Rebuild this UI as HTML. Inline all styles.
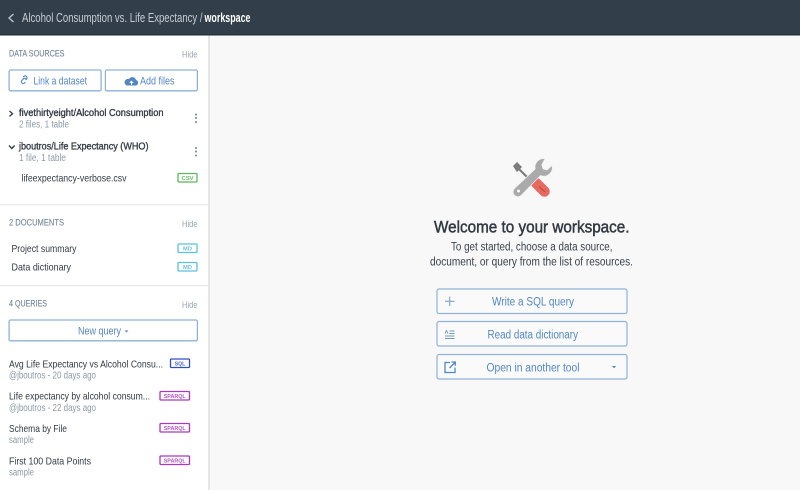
<!DOCTYPE html>
<html lang="en"><head><meta charset="utf-8"><title>Workspace</title>
<style>
html,body{margin:0;padding:0;width:800px;height:490px;overflow:hidden;background:#f8f8f8}
svg{display:block}
text{font-family:"Liberation Sans",sans-serif;white-space:pre}
.h{font-size:9.500px;fill:#71859a;stroke:#71859a;stroke-width:.12}
.hide{font-size:9.500px;fill:#98a6b3}
.t{font-size:10.500px;fill:#323a45}
.st{stroke:#323a45;stroke-width:.35}
.s{font-size:10px;fill:#8c9aa8}
.b{font-size:11px;fill:#5287c4}
.m{font-size:11.500px;fill:#5287c4}
.bd{fill:#fff;stroke:#8fb2d8;stroke-width:1.300}
.mb{fill:#fafafa;stroke:#8fb2d8;stroke-width:1.200}
.tag{font-size:5.500px;font-weight:bold}
.bg{fill:#fff;stroke-width:1.300}
</style></head><body>
<svg width="800" height="490" viewBox="0 0 800 490" xmlns="http://www.w3.org/2000/svg">
<rect width="800" height="490" fill="#f8f8f8"/>
<rect x="0" y="35" width="208" height="455" fill="#fff"/>
<rect x="208" y="35" width="2" height="455" fill="#e6e6e6"/>
<rect width="800" height="35" fill="#323e49"/>
<rect y="34" width="800" height="1.500" fill="#27313a"/>
<path d="M13.500 14 9 18l4.500 4" fill="none" stroke="#c3cad0" stroke-width="1.300"/>
<text x="22" y="22" font-size="12.500" fill="#c6ced5" textLength="180.500" lengthAdjust="spacingAndGlyphs">Alcohol Consumption vs. Life Expectancy /</text>
<text x="204.500" y="22" font-size="12.500" font-weight="bold" fill="#fff" textLength="46" lengthAdjust="spacingAndGlyphs">workspace</text>

<text class="h" x="9" y="56.500" textLength="55.500" lengthAdjust="spacingAndGlyphs">DATA SOURCES</text>
<text class="hide" x="182" y="57.500" textLength="15.500" lengthAdjust="spacingAndGlyphs">Hide</text>
<rect class="bd" x="9.100" y="70" width="92" height="20.800" rx="1.500"/>
<rect class="bd" x="105.400" y="70" width="92" height="20.800" rx="1.500"/>
<g fill="none" stroke="#5287c4" stroke-width="1.100"><path d="M24.500 81.500l-1 1a1.800 1.800 0 0 1-2.600-2.600l1.600-1.600a1.800 1.800 0 0 1 2.600 0M24.500 79.500l1-1a1.800 1.800 0 0 0-2.600-2.600l-.800.800" transform="translate(1 .5)"/></g>
<path d="M127 85.500h8.500a2.800 2.800 0 0 0 .5-5.500 3.800 3.800 0 0 0-7-1 3.300 3.300 0 0 0-2 6.500z" fill="#5287c4"/>
<path d="M131.500 85v-3.500M129.800 83l1.700-1.800 1.700 1.800" fill="none" stroke="#fff" stroke-width="1"/>
<text class="b" x="33.500" y="84.500" textLength="53.500" lengthAdjust="spacingAndGlyphs">Link a dataset</text>
<text class="b" x="140" y="84.500" textLength="34.500" lengthAdjust="spacingAndGlyphs">Add files</text>

<path d="M9.500 111l3 2.700-3 2.700" fill="none" stroke="#323a45" stroke-width="1.300"/>
<text class="t st" x="19" y="116" textLength="144.500" lengthAdjust="spacingAndGlyphs">fivethirtyeight/Alcohol Consumption</text>
<text class="s" x="19" y="127.500" textLength="50" lengthAdjust="spacingAndGlyphs">2 files, 1 table</text>
<g fill="#6d8196"><circle cx="196" cy="114.500" r="1"/><circle cx="196" cy="118" r="1"/><circle cx="196" cy="122" r="1"/><circle cx="196" cy="148" r="1"/><circle cx="196" cy="151.500" r="1"/><circle cx="196" cy="155.500" r="1"/></g>
<path d="M9 145.500l2.800 3 2.800-3" fill="none" stroke="#323a45" stroke-width="1.300"/>
<text class="t st" x="19" y="149.500" textLength="129.500" lengthAdjust="spacingAndGlyphs">jboutros/Life Expectancy (WHO)</text>
<text class="s" x="19" y="161" textLength="47" lengthAdjust="spacingAndGlyphs">1 file, 1 table</text>
<text class="t" x="21.500" y="181.500" textLength="105" lengthAdjust="spacingAndGlyphs">lifeexpectancy-verbose.csv</text>
<rect class="bg" x="178" y="173.500" width="19" height="8.500" rx="1" stroke="#5cb85c"/>
<text class="tag" x="181.500" y="180" fill="#6cbf6c" textLength="12" lengthAdjust="spacingAndGlyphs">CSV</text>

<rect y="204" width="208" height="1.200" fill="#e8e8e8"/>
<text class="h" x="9" y="225.500" textLength="55" lengthAdjust="spacingAndGlyphs">2 DOCUMENTS</text>
<text class="hide" x="182" y="227" textLength="15.500" lengthAdjust="spacingAndGlyphs">Hide</text>
<text class="t" x="11.500" y="252" textLength="65" lengthAdjust="spacingAndGlyphs">Project summary</text>
<rect class="bg" x="178" y="244" width="19" height="8.500" rx="1" stroke="#5bc0de"/>
<text class="tag" x="183" y="250.500" fill="#6cc5e0" textLength="9" lengthAdjust="spacingAndGlyphs">MD</text>
<text class="t" x="11.500" y="270.500" textLength="59.500" lengthAdjust="spacingAndGlyphs">Data dictionary</text>
<rect class="bg" x="178" y="262.500" width="19" height="8.500" rx="1" stroke="#5bc0de"/>
<text class="tag" x="183" y="269" fill="#6cc5e0" textLength="9" lengthAdjust="spacingAndGlyphs">MD</text>

<rect y="285" width="208" height="1.200" fill="#e8e8e8"/>
<text class="h" x="9" y="306.500" textLength="38" lengthAdjust="spacingAndGlyphs">4 QUERIES</text>
<text class="hide" x="182" y="308" textLength="15.500" lengthAdjust="spacingAndGlyphs">Hide</text>
<rect class="bd" x="9.100" y="320" width="188.300" height="20.800" rx="1.500"/>
<text class="b" x="78" y="334.500" textLength="43" lengthAdjust="spacingAndGlyphs">New query</text>
<path d="M124.500 330.500h4l-2 2z" fill="#5287c4"/>

<text class="t" x="9" y="367.500" textLength="154" lengthAdjust="spacingAndGlyphs">Avg Life Expectancy vs Alcohol Consu...</text>
<text class="s" x="9" y="378.500" textLength="87" lengthAdjust="spacingAndGlyphs">@jboutros - 20 days ago</text>
<rect class="bg" x="170.500" y="359" width="19" height="8.500" rx="1" stroke="#2f4fc4"/>
<text class="tag" x="174.700" y="365.500" fill="#4a65cc" textLength="10.500" lengthAdjust="spacingAndGlyphs">SQL</text>

<text class="t" x="9" y="399.500" textLength="141" lengthAdjust="spacingAndGlyphs">Life expectancy by alcohol consum...</text>
<text class="s" x="9" y="411" textLength="87" lengthAdjust="spacingAndGlyphs">@jboutros - 22 days ago</text>
<rect class="bg" x="160" y="391.500" width="29.500" height="8.500" rx="1" stroke="#a838bd"/>
<text class="tag" x="163.700" y="398" fill="#b356c6" textLength="22" lengthAdjust="spacingAndGlyphs">SPARQL</text>

<text class="t" x="9" y="432" textLength="58" lengthAdjust="spacingAndGlyphs">Schema by File</text>
<text class="s" x="9" y="443" textLength="25" lengthAdjust="spacingAndGlyphs">sample</text>
<rect class="bg" x="160" y="423.500" width="29.500" height="8.500" rx="1" stroke="#a838bd"/>
<text class="tag" x="163.700" y="430" fill="#b356c6" textLength="22" lengthAdjust="spacingAndGlyphs">SPARQL</text>

<text class="t" x="9" y="464.500" textLength="82" lengthAdjust="spacingAndGlyphs">First 100 Data Points</text>
<text class="s" x="9" y="475.500" textLength="25" lengthAdjust="spacingAndGlyphs">sample</text>
<rect class="bg" x="160" y="456" width="29.500" height="8.500" rx="1" stroke="#a838bd"/>
<text class="tag" x="163.700" y="462.500" fill="#b356c6" textLength="22" lengthAdjust="spacingAndGlyphs">SPARQL</text>

<!-- tools icon -->
<path d="M513 166l4-4 5 5-1.800 1.800 8.300 8.200-1.500 1.500-8.300-8.200-1.800 1.800z" fill="#7c7c7c"/>
<path d="M536 183l8.500 8.500" fill="none" stroke="#e8695f" stroke-width="10.500" stroke-linecap="round"/>
<path d="M539 186.500l6 5.500" stroke="#b9483f" stroke-width="1"/>
<path d="M545 158.800a8.500 8.500 0 0 0-9.800 10.200L514.500 188.500a4.800 4.800 0 0 0 6.800 6.800L540.500 175.500a8.500 8.500 0 0 0 11.500-10l-5 4.500-4-1.200-1.200-4z" fill="#aaaaaa" stroke="#f2f2f2" stroke-width=".7"/>
<circle cx="518.500" cy="191" r="1.500" fill="#f8f8f8"/>

<text x="434" y="232.700" font-size="17" fill="#343a42" stroke="#343a42" stroke-width=".5" textLength="195.500" lengthAdjust="spacingAndGlyphs">Welcome to your workspace.</text>
<text x="451" y="250.300" font-size="11.500" fill="#3a424b" textLength="161.500" lengthAdjust="spacingAndGlyphs">To get started, choose a data source,</text>
<text x="430" y="265.300" font-size="11.500" fill="#3a424b" textLength="203" lengthAdjust="spacingAndGlyphs">document, or query from the list of resources.</text>

<rect class="mb" x="437" y="289" width="190" height="24.500" rx="2"/>
<rect class="mb" x="437" y="321.500" width="190" height="24.500" rx="2"/>
<rect class="mb" x="437" y="354.500" width="190" height="24.500" rx="2"/>
<path d="M445 301.300h9.500M449.700 296.500v9.500" stroke="#7fa3cc" stroke-width="1.100"/>
<path d="M445 338.500h9.500M445 336h9.500M449.500 333.500h5M449.500 331h5M445 333.500l1.500-3 1.500 3" fill="none" stroke="#6f97c7" stroke-width=".9"/>
<path d="M450 362.500h-5v10h10v-5" fill="none" stroke="#5287c4" stroke-width="1.300"/>
<path d="M449.500 368l5-5M451.500 362h3.800v3.800" fill="none" stroke="#5287c4" stroke-width="1.300"/>
<text class="m" x="492" y="305.300" textLength="82" lengthAdjust="spacingAndGlyphs">Write a SQL query</text>
<text class="m" x="487.500" y="338.300" textLength="90.500" lengthAdjust="spacingAndGlyphs">Read data dictionary</text>
<text class="m" x="486.500" y="371.300" textLength="93" lengthAdjust="spacingAndGlyphs">Open in another tool</text>
<path d="M611.800 366h4.400l-2.200 2.200z" fill="#5287c4"/>
</svg>
</body></html>
